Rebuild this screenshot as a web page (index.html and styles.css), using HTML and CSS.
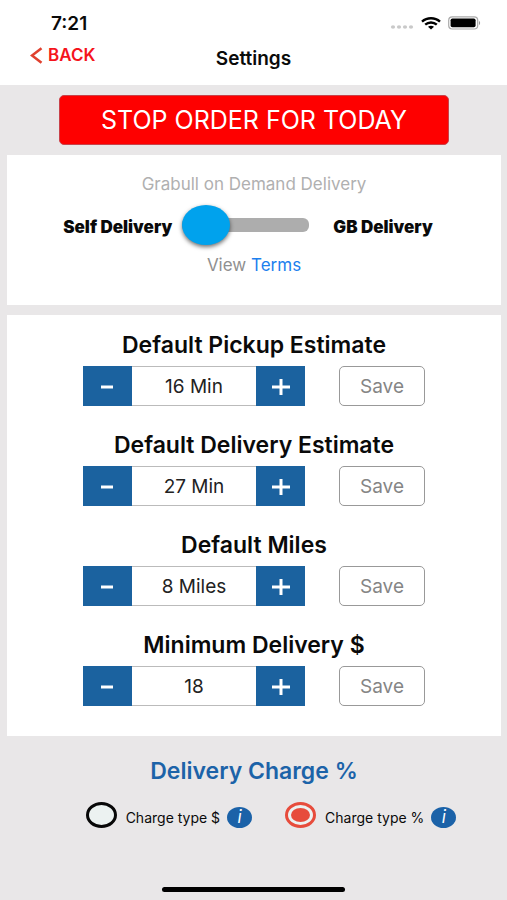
FILE: index.html
```html
<!DOCTYPE html>
<html lang="en">
<head>
<meta charset="utf-8">
<meta name="viewport" content="width=device-width, initial-scale=1">
<title>Settings</title>
<link rel="stylesheet" href="styles.css">
</head>
<body>
<header class="top">
  <div class="status">
    <span class="time">7:21</span>
    <span class="indicators">
      <svg width="24" height="6" viewBox="0 0 24 6" fill="#c9c9c9" aria-hidden="true"><ellipse cx="3" cy="3" rx="2.1" ry="1.7"/><ellipse cx="9" cy="3" rx="2.1" ry="1.7"/><ellipse cx="15" cy="3" rx="2.1" ry="1.7"/><ellipse cx="21" cy="3" rx="2.1" ry="1.7"/></svg>
      <svg class="wifi" width="20" height="13" viewBox="0 0 20 13" fill="none" stroke="#000" stroke-width="2.4" aria-hidden="true"><path d="M1 4.600C6 .1 14 .1 19 4.600"/><path d="M4.200 7.700c3.400-3 8.200-3 11.600 0"/><path d="M7 9.800c1.800-1.400 4.200-1.400 6 0L10 12.600z" fill="#000" stroke="none"/></svg>
      <svg width="33" height="14" viewBox="0 0 33 14" aria-hidden="true"><rect x=".7" y=".8" width="29" height="12.200" rx="3.500" fill="#fff" stroke="#aaa" stroke-width="1.200"/><rect x="2.600" y="2.500" width="25" height="8.800" rx="1.800"/><path d="M31 5c1.500.6 1.500 3.400 0 4z" fill="#999"/></svg>
    </span>
  </div>
  <nav class="bar">
    <a class="back" href="#"><svg width="13" height="17" viewBox="0 0 13 17" fill="none" stroke="#e0412f" stroke-width="2.600" aria-hidden="true"><path d="M11.500 1.300 2 8.500l9.500 7.200"/></svg>BACK</a>
    <h1 class="title">Settings</h1>
  </nav>
</header>

<main class="content">
  <button class="stop" type="button">STOP ORDER FOR TODAY</button>

  <section class="card demand">
    <p class="caption">Grabull on Demand Delivery</p>
    <div class="switch-row">
      <label class="side side-left" for="mode">Self Delivery</label>
      <input class="switch" id="mode" type="range" min="0" max="1" value="0">
      <span class="side">GB Delivery</span>
    </div>
    <p class="terms">View <a href="#">Terms</a></p>
  </section>

  <section class="card estimates">
    <div class="setting">
      <label class="heading" for="pickup">Default Pickup Estimate</label>
      <div class="controls">
        <div class="stepper">
          <button type="button" aria-label="Decrease"><svg width="20" height="18" viewBox="0 0 20 18"><path d="M3 10h12"/></svg></button>
          <input id="pickup" type="text" value="16 Min">
          <button type="button" aria-label="Increase"><svg width="20" height="18" viewBox="0 0 20 18"><path d="M1 10h18M10 2v16"/></svg></button>
        </div>
        <button class="save" type="button">Save</button>
      </div>
    </div>
    <div class="setting">
      <label class="heading" for="delivery">Default Delivery Estimate</label>
      <div class="controls">
        <div class="stepper">
          <button type="button" aria-label="Decrease"><svg width="20" height="18" viewBox="0 0 20 18"><path d="M3 10h12"/></svg></button>
          <input id="delivery" type="text" value="27 Min">
          <button type="button" aria-label="Increase"><svg width="20" height="18" viewBox="0 0 20 18"><path d="M1 10h18M10 2v16"/></svg></button>
        </div>
        <button class="save" type="button">Save</button>
      </div>
    </div>
    <div class="setting">
      <label class="heading" for="miles">Default Miles</label>
      <div class="controls">
        <div class="stepper">
          <button type="button" aria-label="Decrease"><svg width="20" height="18" viewBox="0 0 20 18"><path d="M3 10h12"/></svg></button>
          <input id="miles" type="text" value="8 Miles">
          <button type="button" aria-label="Increase"><svg width="20" height="18" viewBox="0 0 20 18"><path d="M1 10h18M10 2v16"/></svg></button>
        </div>
        <button class="save" type="button">Save</button>
      </div>
    </div>
    <div class="setting">
      <label class="heading" for="minimum">Minimum Delivery $</label>
      <div class="controls">
        <div class="stepper">
          <button type="button" aria-label="Decrease"><svg width="20" height="18" viewBox="0 0 20 18"><path d="M3 10h12"/></svg></button>
          <input id="minimum" type="text" value="18">
          <button type="button" aria-label="Increase"><svg width="20" height="18" viewBox="0 0 20 18"><path d="M1 10h18M10 2v16"/></svg></button>
        </div>
        <button class="save" type="button">Save</button>
      </div>
    </div>
  </section>

  <section class="charge">
    <h2 class="heading charge-title">Delivery Charge %</h2>
    <div class="options">
      <div class="option">
        <input class="radio" type="radio" name="charge" id="dollar">
        <label for="dollar">Charge type $</label>
        <button class="info" type="button">i</button>
      </div>
      <div class="option">
        <input class="radio" type="radio" name="charge" id="percent" checked>
        <label for="percent">Charge type %</label>
        <button class="info" type="button">i</button>
      </div>
    </div>
  </section>
</main>
<div class="home"></div>
</body>
</html>
```
FILE: styles.css
```css
* {
  box-sizing: border-box;
}

body {
  margin: 0;
  min-height: 100vh;
  display: flex;
  flex-direction: column;
  background: #e9e7e8;
  color: #0a0a0a;
  font-family: Inter, "Liberation Sans", sans-serif;
}

h1, h2, p {
  margin: 0;
}

button, input {
  margin: 0;
  padding: 0;
  border: 0;
  font: inherit;
}

a {
  text-decoration: none;
}

.top {
  height: 85px;
  padding-top: 11px;
  background: #fff;
}

.status {
  display: flex;
  justify-content: space-between;
  align-items: center;
  height: 24px;
  padding: 0 26px 0 51px;
}

.time {
  font-size: 19px;
  font-weight: 600;
}

.indicators {
  display: flex;
  align-items: center;
  gap: 7px;
}

.indicators svg:first-child {
  margin-top: 7px;
}

.bar {
  display: grid;
  grid-template-columns: 1fr auto 1fr;
  padding: 9px 30px 0;
}

.back {
  display: flex;
  align-items: center;
  gap: 5px;
  height: 22px;
  color: #f5141c;
  font-size: 17px;
  font-weight: 600;
}

.title {
  padding-top: 4px;
  font-size: 19px;
  line-height: 22px;
  font-weight: 600;
}

.content {
  flex: 1;
  display: flex;
  flex-direction: column;
  gap: 10px;
  padding: 10px 6px 0 7px;
}

.stop {
  align-self: center;
  width: 79%;
  height: 50px;
  border: 1px solid #c8424a;
  border-radius: 5px;
  background: #fe0000;
  color: #fff;
  font-size: 25px;
}

.card {
  background: #fff;
}

.demand {
  padding: 18px 0 30px;
  text-align: center;
}

.caption {
  color: #b0b0b0;
  font-size: 17px;
  line-height: 22px;
}

.switch-row {
  display: flex;
  justify-content: center;
  align-items: center;
  height: 60px;
  padding-right: 12px;
}

.side {
  padding-top: 3px;
  font-size: 17px;
  font-weight: 900;
}

.side:last-child {
  margin-left: 24px;
}

.side-left {
  margin-right: 10px;
}

.switch {
  appearance: none;
  width: 127px;
  height: 40px;
  background: transparent;
}

.switch::-webkit-slider-runnable-track {
  height: 14px;
  border-radius: 6px;
  background: #adadad;
}

.switch::-webkit-slider-thumb {
  appearance: none;
  width: 48px;
  height: 40px;
  margin-top: -13px;
  border-radius: 50%;
  background: #00a2ed;
  box-shadow: 0 2px 4px #00000090;
}

.terms {
  color: #909090;
  font-size: 17px;
  line-height: 20px;
}

.terms a {
  color: #1c7fee;
}

.estimates {
  display: flex;
  flex-direction: column;
  gap: 26px;
  padding: 17px 0 30px;
}

.setting {
  display: flex;
  flex-direction: column;
  align-items: center;
  gap: 7px;
}

.heading {
  font-size: 23px;
  line-height: 27px;
  font-weight: 600;
}

.controls {
  display: flex;
  gap: 34px;
}

.stepper {
  display: flex;
  width: 222px;
  height: 40px;
}

.stepper button {
  flex: none;
  display: flex;
  align-items: center;
  justify-content: center;
  width: 49px;
  background: #1b629f;
}

.stepper svg {
  fill: none;
  stroke: #fff;
  stroke-width: 3;
}

.stepper input {
  flex: 1;
  min-width: 0;
  border: solid #bbb;
  border-width: 1px 0;
  background: #fff;
  color: #222;
  font-size: 19px;
  text-align: center;
}

.save {
  width: 86px;
  height: 40px;
  border: 1px solid #999;
  border-radius: 5px;
  background: #fff;
  color: #858585;
  font-size: 19px;
}

.charge {
  padding-top: 12px;
}

.charge-title {
  color: #1c63a8;
  text-align: center;
}

.options {
  display: flex;
  justify-content: center;
  gap: 33px;
  padding: 17px 0;
  margin-left: 34px;
}

.option {
  display: flex;
  align-items: center;
  font-size: 14px;
}

.option label {
  padding-top: 5px;
}

.radio {
  appearance: none;
  width: 31px;
  height: 26px;
  margin-right: 9px;
  border: 3px solid #080808;
  border-radius: 50%;
  background: #ecf2f1;
}

.radio:checked {
  padding: 3px;
  border-color: #e74c3c;
}

.radio:checked::before {
  content: "";
  display: block;
  height: 100%;
  border-radius: 50%;
  background: #e74c3c;
}

.info {
  width: 25px;
  height: 21px;
  margin-top: 5px;
  margin-left: 7px;
  border-radius: 50%;
  background: #1b62a8;
  color: #fff;
  font-size: 17px;
  font-style: italic;
  line-height: 21px;
}

.home {
  align-self: center;
  width: 36%;
  height: 5px;
  margin-bottom: 8px;
  border-radius: 3px;
  background: #000;
}
```
